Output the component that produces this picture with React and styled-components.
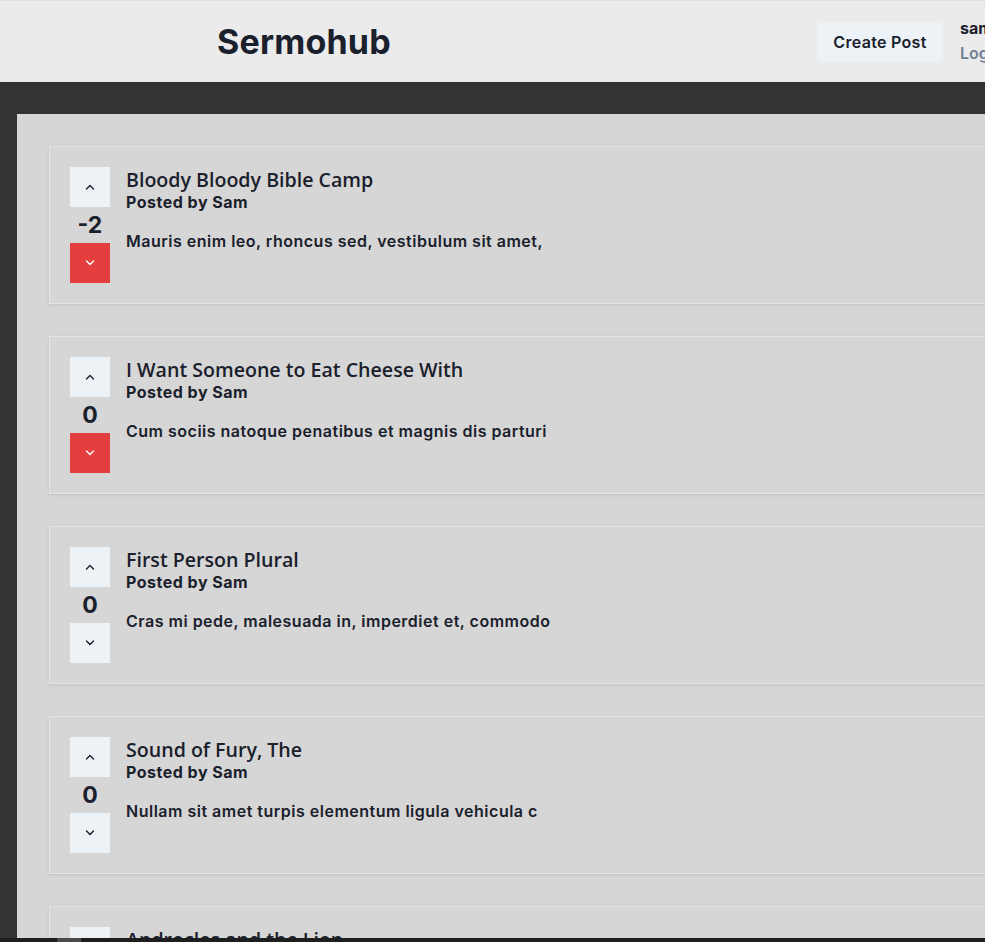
import React from "react";
import styled, { createGlobalStyle } from "styled-components";

const GlobalStyle = createGlobalStyle`
  html, body { margin: 0; padding: 0; overflow: hidden; background: #333333; }
  body { font-family: Inter, "Noto Sans", sans-serif; color: #1a202c; }
  * { box-sizing: border-box; }
`;

const Page = styled.div`
  width: 1100px;
  min-height: 942px;
  background: #333333;
`;

const Header = styled.header`
  height: 82px;
  background: #ebebeb;
  border-top: 1px solid #dcdde1;
  display: flex;
  align-items: center;
  padding-left: 217px;
`;

const Brand = styled.h1`
  flex: 1;
  margin: 0;
  font-family: Inter, sans-serif;
  font-weight: 700;
  font-size: 34px;
  letter-spacing: 0.2px;
  color: #1a202c;
`;

const CreateButton = styled.button`
  width: 126px;
  height: 40px;
  padding: 0;
  border: none;
  border-radius: 6px;
  background: #edf2f7;
  font-family: Inter, sans-serif;
  font-weight: 600;
  font-size: 16px;
  letter-spacing: 0.3px;
  color: #1a202c;
  margin-right: 17px;
  margin-top: 1px;
`;

const UserBlock = styled.div`
  display: flex;
  flex-direction: column;
  gap: 5px;
  width: 140px;
  margin-top: -3px;
`;

const UserName = styled.span`
  font-weight: 700;
  font-size: 16px;
  line-height: 20px;
  color: #1a202c;
`;

const Logout = styled.span`
  font-weight: 600;
  font-size: 16px;
  line-height: 20px;
  color: #718096;
`;

const Main = styled.main`
  padding: 32px 0 0 17px;
`;

const Panel = styled.div`
  background: #d6d6d6;
  padding: 32px;
  display: flex;
  flex-direction: column;
  gap: 32px;
  min-height: 830px;
`;

const Card = styled.article`
  border: 1px solid #dfe6ee;
  box-shadow: 0 1px 3px rgba(0, 0, 0, 0.1);
  padding: 20px;
  display: flex;
  gap: 16px;
  height: 158px;
  flex-shrink: 0;
`;

const VoteColumn = styled.div`
  display: flex;
  flex-direction: column;
  align-items: center;
  width: 40px;
`;

const VoteButton = styled.button`
  width: 40px;
  height: 40px;
  border: none;
  padding: 0;
  display: flex;
  align-items: center;
  justify-content: center;
  background: ${(p) => (p.$active ? "#e53e3e" : "#edf2f7")};
  color: ${(p) => (p.$active ? "#ffffff" : "#1a202c")};
`;

const Score = styled.div`
  height: 36px;
  display: flex;
  align-items: center;
  font-weight: 700;
  font-size: 23px;
  color: #1a202c;
`;

const Content = styled.div`
  display: flex;
  flex-direction: column;
`;

const Title = styled.h2`
  margin: 1px 0 0;
  font-family: "Open Sans", "Noto Sans", sans-serif;
  font-weight: 600;
  font-size: 19.6px;
  line-height: 24px;
  color: #1a202c;
`;

const Byline = styled.div`
  font-weight: 700;
  font-size: 16px;
  letter-spacing: 0.5px;
  line-height: 20px;
`;

const Body = styled.p`
  margin: 19px 0 0;
  font-weight: 600;
  font-size: 16px;
  letter-spacing: 0.5px;
  line-height: 20px;
`;

const ScrollTrack = styled.div`
  position: fixed;
  left: 0;
  right: 0;
  bottom: 0;
  height: 4px;
  background: #1e1e1e;
`;

const ScrollThumb = styled.div`
  margin-left: 57px;
  width: 24px;
  height: 4px;
  background: #4a4a4a;
`;

const Chevron = ({ up }) => (
  <svg width="10" height="6" viewBox="0 0 10 6" fill="none">
    <polyline
      points={up ? "1.5,5 5,1.5 8.5,5" : "1.5,1 5,4.5 8.5,1"}
      stroke="currentColor"
      strokeWidth="1.4"
      strokeLinecap="round"
      strokeLinejoin="round"
    />
  </svg>
);

const posts = [
  { title: "Bloody Bloody Bible Camp", score: "-2", body: "Mauris enim leo, rhoncus sed, vestibulum sit amet,", down: true },
  { title: "I Want Someone to Eat Cheese With", score: "0", body: "Cum sociis natoque penatibus et magnis dis parturi", down: true },
  { title: "First Person Plural", score: "0", body: "Cras mi pede, malesuada in, imperdiet et, commodo", down: false },
  { title: "Sound of Fury, The", score: "0", body: "Nullam sit amet turpis elementum ligula vehicula c", down: false },
  { title: "Androcles and the Lion", score: "0", body: "Donec posuere metus vitae ipsum", down: false },
];

export default function App() {
  return (
    <Page>
      <GlobalStyle />
      <Header>
        <Brand>Sermohub</Brand>
        <CreateButton>Create Post</CreateButton>
        <UserBlock>
          <UserName>sam</UserName>
          <Logout>Logout</Logout>
        </UserBlock>
      </Header>
      <Main>
        <Panel>
          {posts.map((p) => (
            <Card key={p.title}>
              <VoteColumn>
                <VoteButton aria-label="upvote">
                  <Chevron up />
                </VoteButton>
                <Score>{p.score}</Score>
                <VoteButton $active={p.down} aria-label="downvote">
                  <Chevron />
                </VoteButton>
              </VoteColumn>
              <Content>
                <Title>{p.title}</Title>
                <Byline>Posted by Sam</Byline>
                <Body>{p.body}</Body>
              </Content>
            </Card>
          ))}
        </Panel>
      </Main>
      <ScrollTrack>
        <ScrollThumb />
      </ScrollTrack>
    </Page>
  );
}
